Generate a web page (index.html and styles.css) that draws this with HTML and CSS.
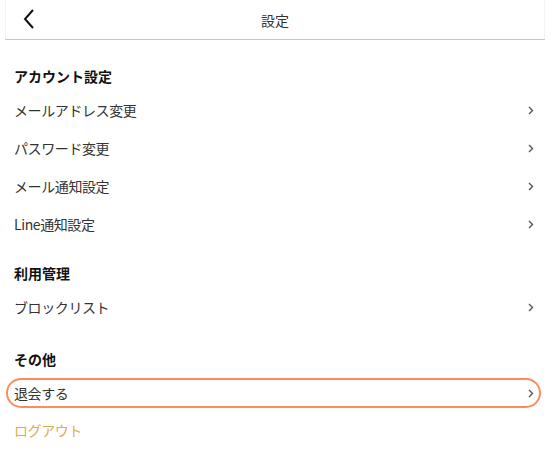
FILE: index.html
```html
<!DOCTYPE html>
<html lang="ja">
<head>
<meta charset="utf-8">
<title>設定</title>
<link rel="stylesheet" href="styles.css">
</head>
<body>
<div class="page">
  <header class="header">
    <span class="back">
      <svg width="12" height="20" viewBox="0 0 12 20"><path d="M10 1 L2 10 L10 19" fill="none" stroke="#111" stroke-width="2"/></svg>
    </span>
    <h1 class="title">設定</h1>
  </header>
  <main class="content">
    <section class="section">
      <h2 class="heading">アカウント設定</h2>
      <div class="row"><span>メールアドレス変更</span><svg class="chev" width="6" height="9" viewBox="0 0 6 9"><path d="M1 1 L4.5 4.5 L1 8" fill="none" stroke="#555" stroke-width="1.4"/></svg></div>
      <div class="row"><span>パスワード変更</span><svg class="chev" width="6" height="9" viewBox="0 0 6 9"><path d="M1 1 L4.5 4.5 L1 8" fill="none" stroke="#555" stroke-width="1.4"/></svg></div>
      <div class="row"><span>メール通知設定</span><svg class="chev" width="6" height="9" viewBox="0 0 6 9"><path d="M1 1 L4.5 4.5 L1 8" fill="none" stroke="#555" stroke-width="1.4"/></svg></div>
      <div class="row"><span>Line通知設定</span><svg class="chev" width="6" height="9" viewBox="0 0 6 9"><path d="M1 1 L4.5 4.5 L1 8" fill="none" stroke="#555" stroke-width="1.4"/></svg></div>
    </section>
    <section class="section">
      <h2 class="heading">利用管理</h2>
      <div class="row"><span>ブロックリスト</span><svg class="chev" width="6" height="9" viewBox="0 0 6 9"><path d="M1 1 L4.5 4.5 L1 8" fill="none" stroke="#555" stroke-width="1.4"/></svg></div>
    </section>
    <section class="section section-other">
      <h2 class="heading">その他</h2>
      <div class="row row-focus"><span>退会する</span><svg class="chev" width="6" height="9" viewBox="0 0 6 9"><path d="M1 1 L4.5 4.5 L1 8" fill="none" stroke="#555" stroke-width="1.4"/></svg></div>
      <div class="row logout"><span>ログアウト</span></div>
    </section>
  </main>
</div>
</body>
</html>
```

FILE: styles.css
```css
* { box-sizing: border-box; }
html, body { margin: 0; padding: 0; background: #fff; }
body {
  font-family: "Noto Sans CJK JP", "Noto Sans", sans-serif;
  color: #333;
  font-size: 14px;
}
.page {
  padding: 0 6px 0 5px;
}
.header {
  position: relative;
  height: 40px;
  display: flex;
  align-items: center;
  justify-content: center;
  border-bottom: 1px solid #e2c48a;
  box-shadow: 1px 0 0 #f3f3f3 inset, -1px 0 0 #f3f3f3 inset;
}
.back {
  position: absolute;
  left: 18px;
  top: 9px;
  display: flex;
}
.title {
  margin: 0;
  font-size: 14px;
  font-weight: normal;
  color: #333;
}
.content {
  padding: 21px 4px 0 1px;
}
.section + .section {
  margin-top: 15px;
}
.section.section-other {
  margin-top: 18px;
}
.heading {
  margin: 0;
  height: 30px;
  display: flex;
  align-items: center;
  padding-left: 8px;
  font-size: 14px;
  font-weight: bold;
  color: #111;
}
.row {
  height: 38px;
  display: flex;
  align-items: center;
  justify-content: space-between;
  padding: 0 7px 0 8px;
  color: #333;
  letter-spacing: -0.4px;
}
.chev { display: block; }
.row-focus {
  height: 30px;
  margin: 4px 0 3px;
  border: 2px solid #ff8a5c;
  border-radius: 15px;
  padding: 0 5px 0 6px;
}
.logout {
  color: #dfaa55;
}
```
